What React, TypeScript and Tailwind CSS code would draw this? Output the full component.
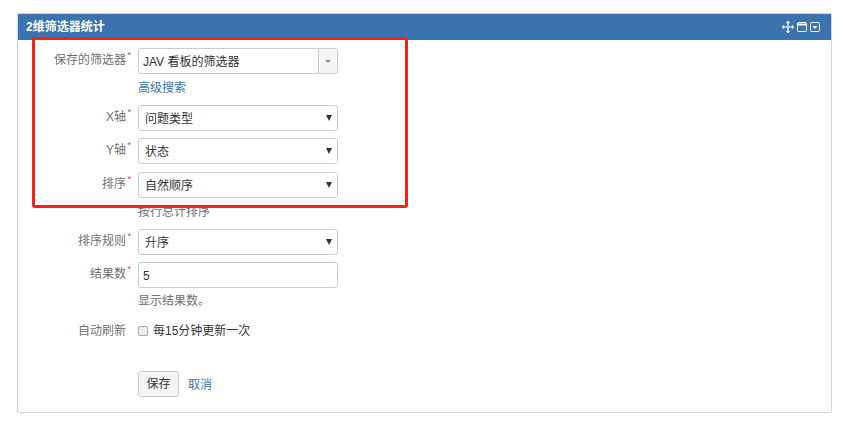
import React from 'react';

const font = { fontFamily: '"Liberation Sans", "Noto Sans CJK SC", sans-serif' };

const Caret = () => (
  <svg width="6" height="6" viewBox="0 0 6 6" className="absolute right-[5px] top-[9px]">
    <path d="M0 0h6L3 6z" fill="#333" />
  </svg>
);

const Label: React.FC<{ text: string; required?: boolean }> = ({ text, required }) => (
  <div className="relative w-[108px] shrink-0 text-right text-[#707070] text-[12px] leading-[16px] pt-[4px]">
    {text}
    {required && <span className="absolute right-[-5px] top-[1px] text-[#d04437] text-[9px] leading-[12px]">*</span>}
  </div>
);

const Select: React.FC<{ value: string }> = ({ value }) => (
  <div className="relative w-[200px] h-[26px] border border-[#ccc] rounded-[3px] bg-white text-[12px] leading-[26px] pl-[6px] text-[#333]">
    {value}
    <Caret />
  </div>
);

export default function App() {
  return (
    <div style={font} className="relative w-[843px] h-[422px] bg-white overflow-hidden pt-[13px] px-[17px]">
      <div className="w-[815px] h-[400px] border border-[#c9d7e6] rounded-[2px]">
        <div className="flex items-center justify-between h-[26px] bg-[#3b73af] pl-[8px] pr-[11px] text-white font-bold text-[12px]">
          <span>2维筛选器统计</span>
          <div className="flex items-center gap-[3px]">
            <svg width="12" height="12" viewBox="0 0 12 12" fill="none" stroke="#fff" strokeWidth="1.2">
              <path d="M6 .5v11M.5 6h11M4.5 2L6 .5 7.5 2M4.5 10L6 11.5 7.5 10M2 4.5L.5 6 2 7.5M10 4.5L11.5 6 10 7.5" />
            </svg>
            <svg width="10" height="10" viewBox="0 0 10 10" fill="none" stroke="#fff">
              <rect x=".5" y=".5" width="9" height="9" rx="1" />
              <path d="M0 2.5h10" strokeWidth="2" />
            </svg>
            <svg width="10" height="10" viewBox="0 0 10 10" fill="none" stroke="#fff">
              <rect x=".5" y=".5" width="9" height="9" rx="1" />
              <path d="M2.5 4h5L5 7z" fill="#fff" stroke="none" />
            </svg>
          </div>
        </div>

        <div className="pt-[8px]">
          <div className="flex gap-[12px]">
            <Label text="保存的筛选器" required />
            <div className="flex w-[200px] h-[26px] border border-[#ccc] rounded-[3px] bg-white text-[12px] leading-[26px] text-[#333]">
              <div className="flex-1 pl-[4px]">JAV 看板的筛选器</div>
              <div className="flex items-center justify-center w-[19px] border-l border-[#ccc] bg-[#f5f5f5] rounded-r-[3px]">
                <svg width="6" height="3" viewBox="0 0 6 3"><path d="M0 0h6L3 3z" fill="#888" /></svg>
              </div>
            </div>
          </div>
          <div className="ml-[120px] mt-[6px] text-[12px] leading-[16px] text-[#3b73af]">高级搜索</div>

          <div className="flex gap-[12px] mt-[9px]">
            <Label text="X轴" required />
            <Select value="问题类型" />
          </div>
          <div className="flex gap-[12px] mt-[7px]">
            <Label text="Y轴" required />
            <Select value="状态" />
          </div>
          <div className="flex gap-[12px] mt-[8px]">
            <Label text="排序" required />
            <Select value="自然顺序" />
          </div>
          <div className="ml-[120px] mt-[6px] text-[12px] leading-[16px] text-[#707070]">按行总计排序</div>

          <div className="flex gap-[12px] mt-[9px]">
            <Label text="排序规则" required />
            <Select value="升序" />
          </div>
          <div className="flex gap-[12px] mt-[7px]">
            <Label text="结果数" required />
            <div className="w-[200px] h-[26px] border border-[#ccc] rounded-[3px] bg-white text-[12px] leading-[26px] pl-[4px] text-[#333]">5</div>
          </div>
          <div className="ml-[120px] mt-[5px] text-[12px] leading-[16px] text-[#707070]">显示结果数。</div>

          <div className="flex gap-[12px] mt-[10px]">
            <Label text="自动刷新" />
            <div className="flex items-center gap-[5px] text-[12px] leading-[16px] pt-[4px] text-[#333]">
              <span className="w-[10px] h-[10px] shrink-0 border border-[#aaa] rounded-[2px] bg-[#eee]" />
              每15分钟更新一次
            </div>
          </div>

          <div className="flex items-center gap-[9px] ml-[120px] mt-[32px] text-[12px]">
            <div className="flex items-center justify-center w-[41px] h-[26px] border border-[#ccc] rounded-[3px] bg-[#f5f5f5] text-[#333]">保存</div>
            <span className="text-[#3b73af] pt-[2px]">取消</span>
          </div>
        </div>
      </div>

      {/* annotation drawn over the form */}
      <div className="absolute left-[32px] top-[37px] w-[376px] h-[171px] border-[3px] border-[#fe2015] rounded-[3px]" />
    </div>
  );
}
